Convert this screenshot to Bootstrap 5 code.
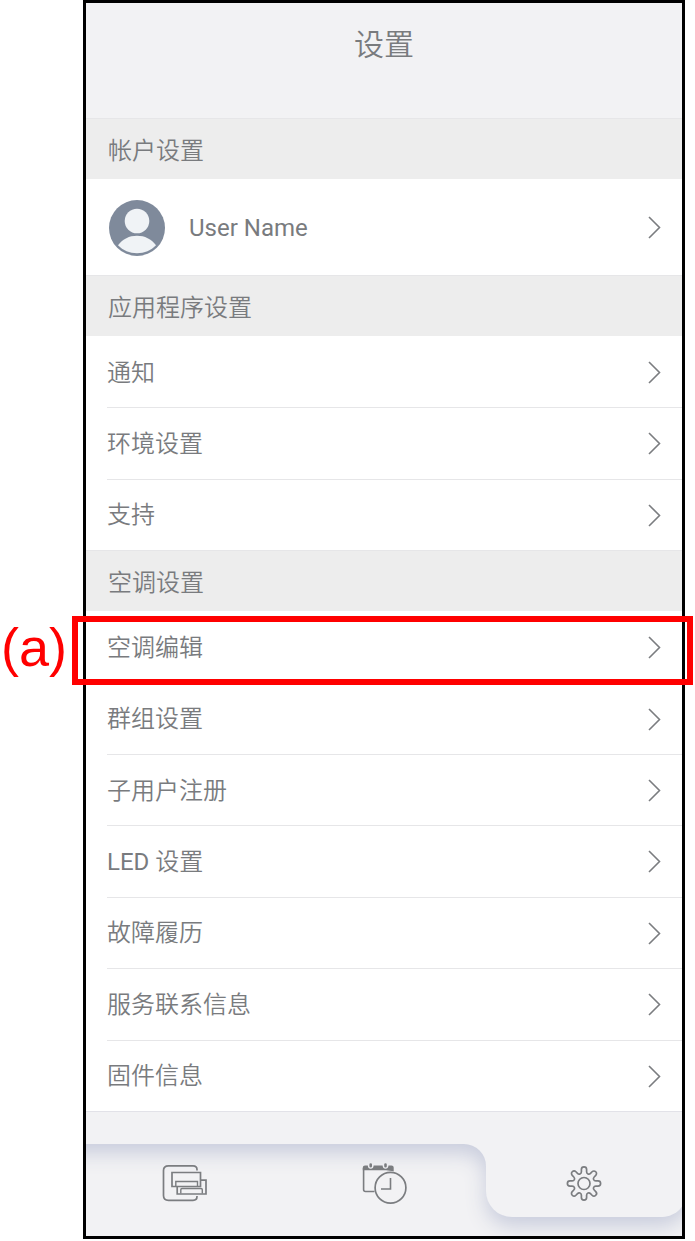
<!DOCTYPE html>
<html lang="zh-CN">
<head>
<meta charset="utf-8">
<meta name="viewport" content="width=device-width, initial-scale=1">
<title>设置</title>
<link href="https://cdn.jsdelivr.net/npm/bootstrap@5.3.0/dist/css/bootstrap.min.css" rel="stylesheet">
<style>
  body { font-family: Roboto, "Noto Sans CJK SC", sans-serif; color: #797b7e; background: #fff; line-height: 36px; }
  .figure-page { padding: 0 10px 3px 83px; }
  .phone { border: 3px solid #000; font-size: 24px; }
  .title-bar { background: #f2f2f4; height: 115px; padding-top: 21px; }
  .title-bar h1 { font-size: 30px; line-height: 42px; font-weight: 350; }
  .group-title { background: #ededed; border-top: 1px solid #e6e6e8; height: 61px; padding: 3px 22px 0; font-size: 24px; line-height: 36px; font-weight: 350; }
  .group-app { height: 214px; }
  .group-ac { height: 500px; }
  .setting { color: inherit; font-weight: 350; }
  .latin { font-weight: 400; }
  .setting-line { margin-left: 21px; padding: 1px 21px 0 0; border-top: 1px solid #e6e6e8; }
  .setting:first-child .setting-line { border-top-color: transparent; }
  .account { height: 96px; padding: 1px 21px 0 23px; }
  .stroke-icon { fill: none; stroke: #7b7d80; stroke-width: 2; }
  .chevron { stroke-width: 1.6; }
  .callout-box { position: absolute; inset: 5px -11px -3px -14px; border: 6px solid #f00; pointer-events: none; }
  .callout-label { position: absolute; right: 100%; top: 50%; transform: translateY(-50%); margin-right: 19px; font: 54px/60px "Liberation Sans", sans-serif; color: #f00; }
  .tab-bar { height: 125px; background: #f2f2f4; border-top: 1px solid #e2e2e8; overflow: hidden; }
  .tab-shape { position: absolute; inset: 0; width: 100%; height: 124px; overflow: visible; filter: drop-shadow(0 9px 10px #c8ccdc); }
  .tab-link { padding-top: 43px; }
</style>
</head>
<body>
<svg class="d-none" aria-hidden="true">
  <symbol id="chevron" viewBox="0 0 13 23"><path d="M1 1l10.500 10.500L1 22"/></symbol>
</svg>
<div class="figure-page">
  <div class="phone">
    <header class="title-bar text-center"><h1 class="m-0">设置</h1></header>
    <main>
      <h2 class="group-title d-flex align-items-center m-0">帐户设置</h2>
      <a href="#account" class="account setting d-flex align-items-center text-decoration-none">
        <svg width="56" height="56" viewBox="0 0 56 56" aria-hidden="true">
          <circle cx="28" cy="28" r="28" fill="#7f8a9b"/>
          <circle cx="28" cy="21" r="12.300" fill="#f0f3f6"/>
          <path d="M9 45.300C14 39 20 35.800 28 35.800S42 39 47 45.300C42 50.500 35.500 53.300 28 53.300S14 50.500 9 45.300Z" fill="#f0f3f6"/>
        </svg>
        <span class="latin ms-4 me-auto">User Name</span>
        <svg class="stroke-icon chevron" width="13" height="23" aria-hidden="true"><use href="#chevron"/></svg>
      </a>

      <h2 class="group-title d-flex align-items-center m-0">应用程序设置</h2>
      <nav class="group-app d-flex flex-column" aria-label="应用程序设置">
        <a href="#notice" class="setting d-flex flex-fill text-decoration-none"><span class="setting-line d-flex flex-fill align-items-center justify-content-between">通知<svg class="stroke-icon chevron" width="13" height="23" aria-hidden="true"><use href="#chevron"/></svg></span></a>
        <a href="#environment" class="setting d-flex flex-fill text-decoration-none"><span class="setting-line d-flex flex-fill align-items-center justify-content-between">环境设置<svg class="stroke-icon chevron" width="13" height="23" aria-hidden="true"><use href="#chevron"/></svg></span></a>
        <a href="#support" class="setting d-flex flex-fill text-decoration-none"><span class="setting-line d-flex flex-fill align-items-center justify-content-between">支持<svg class="stroke-icon chevron" width="13" height="23" aria-hidden="true"><use href="#chevron"/></svg></span></a>
      </nav>

      <h2 class="group-title d-flex align-items-center m-0">空调设置</h2>
      <nav class="group-ac d-flex flex-column" aria-label="空调设置">
        <a href="#edit" class="setting d-flex flex-fill text-decoration-none position-relative"><span class="setting-line d-flex flex-fill align-items-center justify-content-between">空调编辑<svg class="stroke-icon chevron" width="13" height="23" aria-hidden="true"><use href="#chevron"/></svg></span><span class="callout-box"></span><span class="callout-label">(a)</span></a>
        <a href="#group" class="setting d-flex flex-fill text-decoration-none"><span class="setting-line d-flex flex-fill align-items-center justify-content-between">群组设置<svg class="stroke-icon chevron" width="13" height="23" aria-hidden="true"><use href="#chevron"/></svg></span></a>
        <a href="#users" class="setting d-flex flex-fill text-decoration-none"><span class="setting-line d-flex flex-fill align-items-center justify-content-between">子用户注册<svg class="stroke-icon chevron" width="13" height="23" aria-hidden="true"><use href="#chevron"/></svg></span></a>
        <a href="#led" class="setting d-flex flex-fill text-decoration-none"><span class="setting-line d-flex flex-fill align-items-center justify-content-between"><span><span class="latin">LED</span> 设置</span><svg class="stroke-icon chevron" width="13" height="23" aria-hidden="true"><use href="#chevron"/></svg></span></a>
        <a href="#faults" class="setting d-flex flex-fill text-decoration-none"><span class="setting-line d-flex flex-fill align-items-center justify-content-between">故障履历<svg class="stroke-icon chevron" width="13" height="23" aria-hidden="true"><use href="#chevron"/></svg></span></a>
        <a href="#contact" class="setting d-flex flex-fill text-decoration-none"><span class="setting-line d-flex flex-fill align-items-center justify-content-between">服务联系信息<svg class="stroke-icon chevron" width="13" height="23" aria-hidden="true"><use href="#chevron"/></svg></span></a>
        <a href="#firmware" class="setting d-flex flex-fill text-decoration-none"><span class="setting-line d-flex flex-fill align-items-center justify-content-between">固件信息<svg class="stroke-icon chevron" width="13" height="23" aria-hidden="true"><use href="#chevron"/></svg></span></a>
      </nav>
    </main>

    <nav class="tab-bar position-relative" aria-label="主导航">
      <svg class="tab-shape" viewBox="0 0 596 124" preserveAspectRatio="none" aria-hidden="true">
        <path fill="#f2f2f4" d="M-40-20H640V80H602C598 98 588 105 574 105H426A26 26 0 0 1 400 79V54A22 22 0 0 0 378 32H-40Z"/>
      </svg>
      <div class="row g-0 position-relative text-center">
        <a href="#home" class="tab-link col d-flex justify-content-center" aria-label="空调">
          <svg class="stroke-icon" width="70" height="55" viewBox="0 0 70 55" aria-hidden="true">
            <path stroke-width="1.700" d="M47 15.500V14.500Q47 10.800 43 10.800H18.500Q13.500 10.800 13.500 15.500V40.500Q13.500 45.300 18.500 45.300H43Q47 45.300 47 41.500V41"/>
            <path stroke-width="1.700" d="M22 17.500H50.500V31.500H22ZM50.500 25.200H56V39H27.200V31.500"/>
            <path stroke-width="1.400" d="M25.800 31V26.500H47.500V31M30.800 38.500V34.800Q30.800 33.500 32 33.500H51Q52.300 33.500 52.300 34.800V38.500"/>
          </svg>
        </a>
        <a href="#schedule" class="tab-link col d-flex justify-content-center" aria-label="日程">
          <svg class="stroke-icon" width="70" height="55" viewBox="-1 0 70 55" aria-hidden="true">
            <path stroke-width="1.600" d="M24.500 36.500H15.500Q13.600 36.500 13.600 34.500V13"/>
            <path stroke="none" fill="#7b7d80" d="M12.800 15.300V12.500Q12.800 10.500 15 10.500H17.800Q18 13.800 20.700 13.800T23.600 10.500H32.600Q32.900 13.800 35.500 13.800T38.500 10.500H41.500Q43.700 10.500 43.700 12.500V16.300Q39.500 15.700 36 15.300Z"/>
            <path stroke-width="2.600" stroke-linecap="round" d="M20.700 9.500V11.300M35.500 9.500V11.300"/>
            <circle cx="40.500" cy="32.800" r="15.400" stroke-width="1.700"/>
            <path stroke-width="1.600" d="M40.500 23V34H31"/>
          </svg>
        </a>
        <a href="#settings" class="tab-link col d-flex justify-content-center" aria-label="设置" aria-current="page">
          <svg class="stroke-icon" width="70" height="55" viewBox="-36 -28.500 70 55" aria-hidden="true">
            <g stroke-width="1.700">
              <circle r="6"/>
              <path d="M-2.600-14A2.600 2.600 0 0 1 2.600-14V-11.800C2.600-9.600 4.950-8.630 6.500-10.200L8.060-11.740A2.600 2.600 0 0 1 11.740-8.060L10.200-6.500C8.630-4.950 9.600-2.600 11.800-2.600H14A2.600 2.600 0 0 1 14 2.600H11.800C9.600 2.600 8.630 4.950 10.200 6.500L11.740 8.060A2.600 2.600 0 0 1 8.060 11.740L6.500 10.200C4.950 8.630 2.600 9.600 2.600 11.800V14A2.600 2.600 0 0 1-2.600 14V11.800C-2.600 9.600-4.950 8.630-6.500 10.200L-8.060 11.740A2.600 2.600 0 0 1-11.740 8.060L-10.200 6.500C-8.630 4.950-9.600 2.600-11.800 2.600H-14A2.600 2.600 0 0 1-14-2.600H-11.800C-9.600-2.600-8.630-4.950-10.200-6.500L-11.740-8.060A2.600 2.600 0 0 1-8.060-11.740L-6.500-10.200C-4.950-8.630-2.600-9.600-2.600-11.800Z"/>
            </g>
          </svg>
        </a>
      </div>
    </nav>
  </div>
</div>
<script src="https://cdn.jsdelivr.net/npm/bootstrap@5.3.0/dist/js/bootstrap.bundle.min.js"></script>
</body>
</html>
